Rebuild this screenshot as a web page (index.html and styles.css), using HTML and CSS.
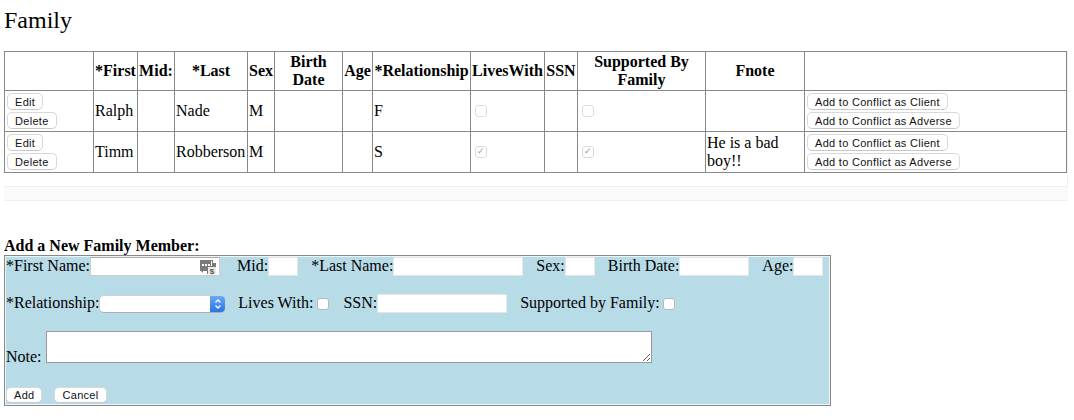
FILE: index.html
```html
<!DOCTYPE html>
<html lang="en">
<head>
    <meta charset="UTF-8">
    <title>Family</title>
    <link rel="stylesheet" href="styles.css">
</head>
<body>
    <h1>Family</h1>

    <!-- Existing members -->
    <div class="table-scroll">
        <table class="family-table">
            <colgroup>
                <col class="c-actions"><col class="c-first"><col class="c-mid"><col class="c-last"><col class="c-sex"><col class="c-birth"><col class="c-age"><col class="c-rel"><col class="c-lives"><col class="c-ssn"><col class="c-supported"><col class="c-note"><col class="c-conflict">
            </colgroup>
            <thead>
                <tr>
                    <th></th>
                    <th>*First</th>
                    <th>Mid:</th>
                    <th>*Last</th>
                    <th>Sex</th>
                    <th>Birth Date</th>
                    <th>Age</th>
                    <th>*Relationship</th>
                    <th>LivesWith</th>
                    <th>SSN</th>
                    <th>Supported By Family</th>
                    <th>Fnote</th>
                    <th></th>
                </tr>
            </thead>
            <tbody>
                <tr>
                    <td class="btn-cell"><button>Edit</button><button>Delete</button></td>
                    <td>Ralph</td>
                    <td></td>
                    <td>Nade</td>
                    <td>M</td>
                    <td></td>
                    <td></td>
                    <td>F</td>
                    <td><input type="checkbox" class="check" disabled></td>
                    <td></td>
                    <td><input type="checkbox" class="check" disabled></td>
                    <td></td>
                    <td class="btn-cell"><button>Add to Conflict as Client</button><button>Add to Conflict as Adverse</button></td>
                </tr>
                <tr>
                    <td class="btn-cell"><button>Edit</button><button>Delete</button></td>
                    <td>Timm</td>
                    <td></td>
                    <td>Robberson</td>
                    <td>M</td>
                    <td></td>
                    <td></td>
                    <td>S</td>
                    <td><input type="checkbox" class="check" checked disabled></td>
                    <td></td>
                    <td><input type="checkbox" class="check" checked disabled></td>
                    <td>He is a bad boy!!</td>
                    <td class="btn-cell"><button>Add to Conflict as Client</button><button>Add to Conflict as Adverse</button></td>
                </tr>
            </tbody>
        </table>
    </div>
    <div class="scroll-track"></div>

    <!-- New member form -->
    <h4>Add a New Family Member:</h4>
    <form class="add-form">
        <div class="form-row row-one">
            <label>*First Name:</label>
            <span class="first-wrap">
                <input type="text" class="field first-field">
                <svg class="contact-icon" width="17" height="16" viewBox="0 0 17 16">
                    <path d="M0 1h13v3h3v11H7v-3H3v2l-2-2H0z" fill="#7a7a7a"/>
                    <rect x="2" y="5" width="2" height="2" fill="#fff"/>
                    <rect x="5" y="5" width="2" height="2" fill="#fff"/>
                    <rect x="8" y="5" width="2" height="2" fill="#fff"/>
                    <rect x="11" y="2" width="1" height="5" fill="#fff"/>
                    <rect x="8" y="8" width="8" height="7" fill="#e8e8e8"/>
                    <text x="12" y="14.500" class="contact-s">$</text>
                </svg>
            </span>
            <label class="gap-mid">Mid:</label>
            <input type="text" class="field w-small">
            <label class="gap-last">*Last Name:</label>
            <input type="text" class="field w-last">
            <label class="gap-sex">Sex:</label>
            <input type="text" class="field w-small">
            <label class="gap-birth">Birth Date:</label>
            <input type="text" class="field w-birth">
            <label class="gap-age">Age:</label>
            <input type="text" class="field w-small">
        </div>
        <div class="form-row row-two">
            <label>*Relationship:</label>
            <span class="select-mock">
                <span class="select-arrows">
                    <svg width="8" height="12" viewBox="0 0 8 12" fill="none" stroke="#fff" stroke-width="1.300">
                        <path d="M1.500 4.500 4 2l2.500 2.500"/>
                        <path d="M1.500 7.500 4 10l2.500-2.500"/>
                    </svg>
                </span>
            </span>
            <label class="gap-lives">Lives With:</label>
            <input type="checkbox" class="check form-check">
            <label class="gap-ssn">SSN:</label>
            <input type="text" class="field w-ssn">
            <label class="gap-supported">Supported by Family:</label>
            <input type="checkbox" class="check form-check">
        </div>
        <div class="form-row row-three">
            <label class="note-label">Note:</label>
            <textarea class="note"></textarea>
        </div>
        <div class="form-row row-four">
            <button type="button">Add</button>
            <button type="button" class="gap-cancel">Cancel</button>
        </div>
    </form>
</body>
</html>
```

FILE: styles.css
```css
/* Overall page */
body {
    margin: 0;
    padding: 0 6px 0 4px;
    background: #fff;
    color: #000;
    font-family: "Liberation Serif", "Times New Roman", serif;
    font-size: 16px;
}

h1 {
    margin: 0;
    padding-top: 7px;
    height: 51px;
    box-sizing: border-box;
    font-size: 24px;
    font-weight: normal;
    line-height: 27px;
}

/* Table */
.table-scroll {
    height: 135px;
    box-sizing: border-box;
    border-right: 1px solid #f0f0f0;
}

.family-table {
    width: 1063px;
    table-layout: fixed;
    border-collapse: collapse;
}

.family-table th,
.family-table td {
    border: 1px solid #888;
    padding: 1px;
    line-height: 18px;
    vertical-align: middle;
    overflow: visible;
}

.family-table th {
    height: 36px;
    text-align: center;
}

.family-table td {
    height: 38px;
    text-align: left;
}

.c-actions { width: 89px; }
.c-first { width: 44px; }
.c-mid { width: 37px; }
.c-last { width: 73px; }
.c-sex { width: 27px; }
.c-birth { width: 68px; }
.c-age { width: 30px; }
.c-rel { width: 98px; }
.c-lives { width: 74px; }
.c-ssn { width: 33px; }
.c-supported { width: 128px; }
.c-note { width: 99px; }
.c-conflict { width: 262px; }

/* Buttons */
button {
    display: inline-block;
    height: 17px;
    margin: 0;
    padding: 0 7px;
    box-sizing: border-box;
    background: #fff;
    border: 1px solid #d8d8d8;
    border-bottom-color: #c8c8c8;
    border-radius: 5px;
    color: #111;
    font-family: "Liberation Sans", Arial, sans-serif;
    font-size: 11px;
    letter-spacing: 0.3px;
    line-height: 15px;
    white-space: nowrap;
}

.btn-cell button {
    display: block;
    margin: 2px 0 0 1px;
    padding-top: 2px;
    line-height: 13px;
}

.family-table .btn-cell {
    padding: 0 1px;
    vertical-align: top;
}

.check {
    appearance: none;
    display: block;
    width: 12px;
    height: 12px;
    margin: 0 0 0 3px;
    background: #fff;
    border: 1px solid #ddd;
    border-radius: 3px;
    box-sizing: border-box;
    position: relative;
}

.check:checked::after {
    content: "\2713";
    position: absolute;
    left: 1px;
    top: -2px;
    color: #999;
    font-family: "DejaVu Sans", sans-serif;
    font-size: 9px;
    line-height: 12px;
}

/* Fake scroll bar under table */
.scroll-track {
    height: 15px;
    box-sizing: border-box;
    background: #fafafa;
    border-top: 1px solid #efefef;
    border-bottom: 1px solid #efefef;
}

h4 {
    margin: 36px 0 0;
    height: 18px;
    font-size: 16px;
    font-weight: bold;
    line-height: 18px;
}

/* Form */
.add-form {
    width: 827px;
    height: 151px;
    box-sizing: border-box;
    background: #b8dbe8;
    border: 1px solid #888;
    box-shadow: inset 0 0 0 1px #eef5f8;
    padding: 0 1px;
}

.form-row {
    display: flex;
    align-items: flex-start;
}

.form-row label {
    padding-top: 1px;
    line-height: 18px;
}

.row-one { height: 20px; }
.row-two { height: 20px; margin-top: 17px; }
.row-three { height: 33px; margin-top: 18px; align-items: flex-end; }
.row-four { height: 18px; margin-top: 22px; }

.row-four button {
    height: 16px;
    margin-top: 1px;
}

.row-four .gap-cancel {
    margin-left: 12px;
}

.field {
    height: 19px;
    margin-top: 1px;
    padding: 0;
    box-sizing: border-box;
    background: #fff;
    border: 1px solid #e2e6e8;
}

.first-wrap {
    position: relative;
    display: block;
}

.first-field {
    display: block;
    width: 130px;
    border: 1px solid #ccc;
    border-top-color: #aaa;
}

.contact-icon {
    position: absolute;
    top: 3px;
    right: 3px;
}

.contact-s {
    fill: #555;
    font-family: "Liberation Sans", sans-serif;
    font-size: 8px;
    font-weight: bold;
    text-anchor: middle;
}

.w-small { width: 30px; }
.w-last { width: 130px; }
.w-birth { width: 70px; }
.w-ssn { width: 130px; }

.gap-mid { margin-left: 17px; }
.gap-last { margin-left: 13px; }
.gap-sex { margin-left: 13px; }
.gap-birth { margin-left: 13px; }
.gap-age { margin-left: 13px; }
.gap-lives { margin-left: 12px; }
.gap-ssn { margin-left: 14px; }
.gap-supported { margin-left: 13px; }

.form-check {
    margin: 5px 0 0 3px;
    border-color: #b8b8b8;
}

.gap-lives + .form-check {
    margin-left: 4px;
}

.select-mock {
    display: flex;
    justify-content: flex-end;
    width: 127px;
    height: 18px;
    margin-top: 2px;
    box-sizing: border-box;
    background: #fff;
    border: 1px solid #c8d2d8;
    border-bottom-color: #a8b0b6;
    border-radius: 5px;
    overflow: hidden;
}

.select-arrows {
    display: flex;
    align-items: center;
    justify-content: center;
    width: 15px;
    background: linear-gradient(#6aa8f5, #2a72e8);
}

.note-label {
    margin-bottom: -2px;
}

.note {
    display: block;
    width: 606px;
    height: 32px;
    margin: 0 0 1px 4px;
    padding: 0;
    box-sizing: border-box;
    background: #fff;
    border: 1px solid #999;
}
```
